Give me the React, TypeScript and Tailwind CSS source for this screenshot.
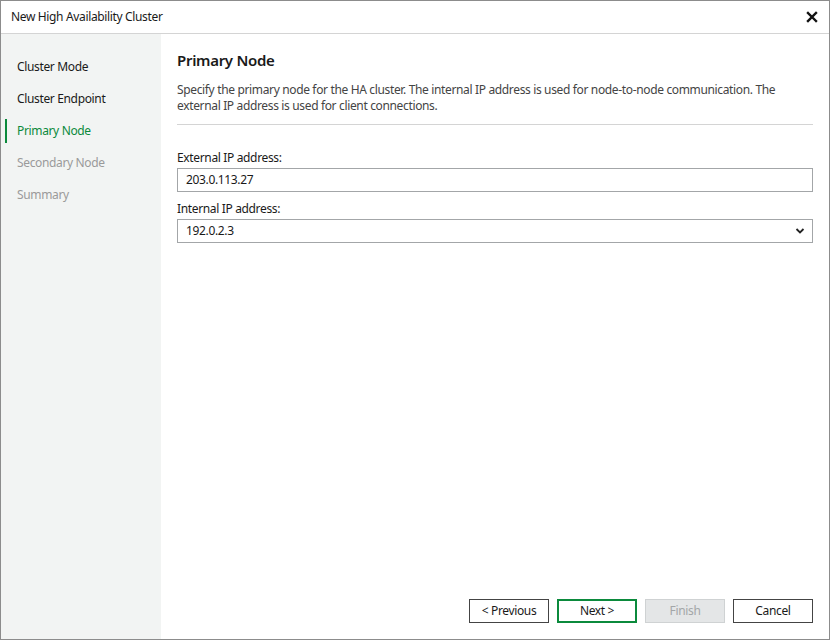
export default function App() {
  const steps = [
    { label: "Cluster Mode", state: "done" },
    { label: "Cluster Endpoint", state: "done" },
    { label: "Primary Node", state: "active" },
    { label: "Secondary Node", state: "todo" },
    { label: "Summary", state: "todo" },
  ];

  return (
    <div
      className="w-[830px] h-[640px] flex flex-col bg-white border border-[#8c8c8c] text-[12px] tracking-[-0.35px] text-[#222]"
      style={{ fontFamily: '"Noto Sans", "Open Sans", sans-serif' }}
    >
      {/* TITLE BAR */}
      <div className="h-[33px] flex items-center justify-between pl-[10px] pr-[10px] border-b border-[#d4d4d4]">
        <span className="text-[12px] text-[#1a1a1a]">New High Availability Cluster</span>
        <svg width="12" height="12" viewBox="0 0 12 12" className="mr-[1px]">
          <path d="M2 2 L10 10 M10 2 L2 10" stroke="#111" strokeWidth="2.4" strokeLinecap="square" />
        </svg>
      </div>

      <div className="flex flex-1 min-h-0">
        {/* SIDEBAR */}
        <div className="w-[160px] bg-[#f2f4f3] pt-[17px]">
          {steps.map((s) => (
            <div key={s.label} className="relative h-[32px] flex items-center pl-[16px]">
              {s.state === "active" && (
                <div className="absolute left-[4px] top-[4px] w-[2px] h-[24px] bg-[#0b8a3c]" />
              )}
              <span
                className={
                  s.state === "active"
                    ? "text-[#0b8a3c]"
                    : s.state === "done"
                    ? "text-[#1a1a1a]"
                    : "text-[#9a9a9a]"
                }
              >
                {s.label}
              </span>
            </div>
          ))}
        </div>

        {/* CONTENT */}
        <div className="flex-1 flex flex-col pl-[16px] pr-[16px] pt-[15px] pb-[16px]">
          <h1 className="text-[15px] font-semibold tracking-[-0.3px] text-[#1a1a1a] leading-[22px]">Primary Node</h1>

          <p className="mt-[11px] text-[#444] leading-[16px] pr-[20px]">
            Specify the primary node for the HA cluster. The internal IP address is used for node-to-node
            communication. The external IP address is used for client connections.
          </p>

          <div className="mt-[10px] border-t border-[#d4d4d4]" />

          <label className="mt-[25px] leading-[16px] text-[#1a1a1a]">External IP address:</label>
          <div className="mt-[2px] h-[24px] border border-[#a3a6a8] flex items-center pl-[8px] text-[#1a1a1a]">
            203.0.113.27
          </div>

          <label className="mt-[9px] leading-[16px] text-[#1a1a1a]">Internal IP address:</label>
          <div className="mt-[2px] h-[24px] border border-[#a3a6a8] flex items-center justify-between pl-[8px] pr-[7px] text-[#1a1a1a]">
            <span>192.0.2.3</span>
            <svg width="10" height="8" viewBox="0 0 10 8">
              <path d="M1.5 2 L5 5.5 L8.5 2" stroke="#222" strokeWidth="1.8" fill="none" />
            </svg>
          </div>

          <div className="flex-1" />

          {/* BUTTONS */}
          <div className="flex justify-end gap-[8px]">
            <button className="w-[80px] h-[24px] border border-[#444] bg-white text-[#1a1a1a]">
              &lt; Previous
            </button>
            <button className="w-[80px] h-[24px] border-2 border-[#0b8a3c] bg-white text-[#1a1a1a]">
              Next &gt;
            </button>
            <button className="w-[80px] h-[24px] border border-[#cfd2d3] bg-[#e4e6e7] text-[#a3a6a8]">
              Finish
            </button>
            <button className="w-[80px] h-[24px] border border-[#444] bg-white text-[#1a1a1a]">
              Cancel
            </button>
          </div>
        </div>
      </div>
    </div>
  );
}
